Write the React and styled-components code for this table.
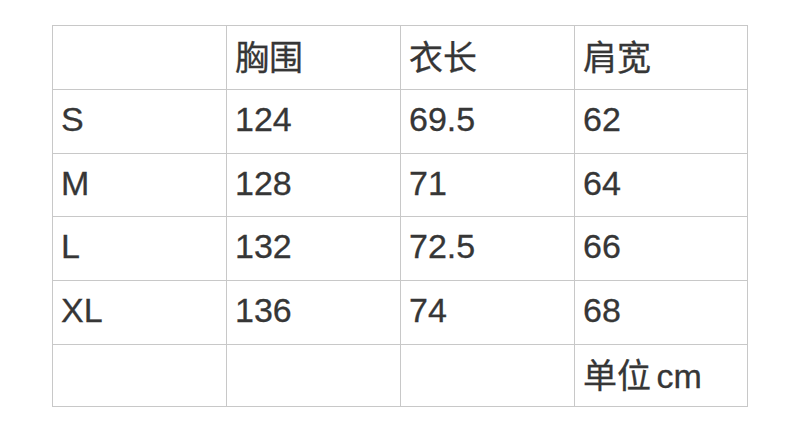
import styled, { createGlobalStyle } from "styled-components";

const GlobalStyle = createGlobalStyle`
  html, body {
    margin: 0;
    padding: 0;
    background: #ffffff;
  }
  body {
    font-family: "Liberation Sans", "Noto Sans CJK SC", sans-serif;
  }
`;

const Page = styled.div`
  width: 800px;
  height: 424px;
  padding: 25px 0 0 52px;
  box-sizing: border-box;
`;

const Grid = styled.div`
  display: grid;
  grid-template-columns: 174px 174px 174px 173px;
  grid-template-rows: 64px 64px 63px 64px 64px 62px;
  width: max-content;
  border-top: 1px solid #c8c8c8;
  border-left: 1px solid #c8c8c8;
`;

const Cell = styled.div`
  display: flex;
  align-items: center;
  box-sizing: border-box;
  padding: 0 0 4px 8px;
  border-right: 1px solid #c8c8c8;
  border-bottom: 1px solid #c8c8c8;
  font-size: 34px;
  color: #363636;
  -webkit-text-stroke: 0.3px #363636;
  word-spacing: -4px;
  white-space: nowrap;
`;

const header = ["", "胸围", "衣长", "肩宽"];
const rows = [
  ["S", "124", "69.5", "62"],
  ["M", "128", "71", "64"],
  ["L", "132", "72.5", "66"],
  ["XL", "136", "74", "68"],
  ["", "", "", "单位 cm"],
];

export default function App() {
  return (
    <>
      <GlobalStyle />
      <Page>
        <Grid>
          {[header, ...rows].map((row, r) =>
            row.map((text, c) => <Cell key={`${r}-${c}`}>{text}</Cell>)
          )}
        </Grid>
      </Page>
    </>
  );
}
